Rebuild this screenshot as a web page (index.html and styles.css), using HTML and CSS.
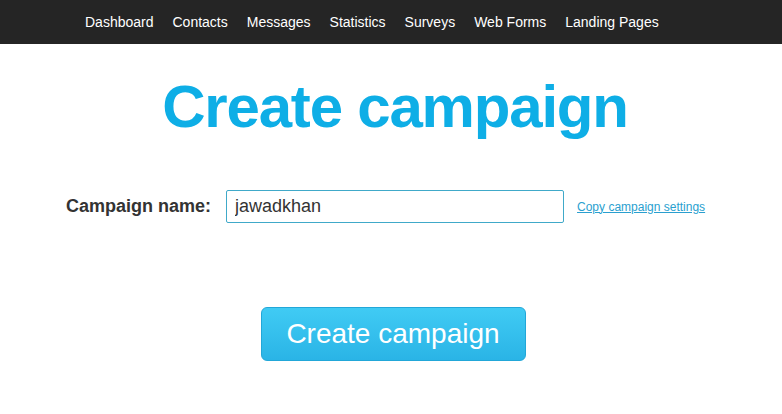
FILE: index.html
```html
<!DOCTYPE html>
<html lang="en">
     <head>
          <meta charset="UTF-8" />
          <meta name="viewport" content="width=device-width, initial-scale=1.0" />
          <title>Create campaign</title>
          <link rel="stylesheet" href="styles.css">
     </head>
     <body>
          <nav class="topbar">
               <ul>
                    <li><a href="#">Dashboard</a></li>
                    <li><a href="#">Contacts</a></li>
                    <li><a href="#">Messages</a></li>
                    <li><a href="#">Statistics</a></li>
                    <li><a href="#">Surveys</a></li>
                    <li><a href="#">Web Forms</a></li>
                    <li><a href="#">Landing Pages</a></li>
               </ul>
          </nav>

          <main class="page">
               <h1 class="page-title">Create campaign</h1>

               <form class="campaign-form">
                    <div class="field-row">
                         <label class="field-label" for="cname">Campaign name:</label>
                         <input class="field-input" id="cname" type="text" value="jawadkhan" />
                         <a class="copy-link" href="#">Copy campaign settings</a>
                    </div>
                    <div class="submit-row">
                         <button class="create-btn" type="button">Create campaign</button>
                    </div>
               </form>
          </main>
     </body>
</html>
```

FILE: styles.css
```css
* {
     padding: 0;
     margin: 0;
     box-sizing: border-box;
}
body {
     font-family: Arial, "Liberation Sans", Helvetica, sans-serif;
     background-color: #fff;
     color: #333;
}

/* top navigation */
.topbar {
     height: 44px;
     background-color: #252525;
     display: flex;
     align-items: center;
     padding-left: 85px;
}
.topbar ul {
     list-style-type: none;
     display: flex;
     gap: 19px;
}
.topbar ul li a {
     text-decoration: none;
     color: #fff;
     font-size: 14px;
     line-height: 16px;
}

/* main */
.page {
     display: flex;
     flex-direction: column;
     align-items: center;
}
.page-title {
     margin-top: 33px;
     font-size: 60px;
     line-height: 60px;
     letter-spacing: -1.2px;
     font-weight: bold;
     color: #0eaee6;
     padding-left: 8px;
}

.campaign-form {
     width: 100%;
}
.field-row {
     display: flex;
     align-items: center;
     margin-top: 53px;
     padding-left: 66px;
}
.field-label {
     font-size: 18px;
     font-weight: bold;
     color: #333;
     margin-right: 15px;
}
.field-input {
     width: 338px;
     height: 33px;
     border: 1px solid #40a9c9;
     border-radius: 2px;
     padding: 0 8px;
     font-family: inherit;
     font-size: 18px;
     color: #333;
     outline: none;
}
.copy-link {
     margin-left: 13px;
     font-size: 12px;
     color: #2a9fcf;
     text-decoration: underline;
}

.submit-row {
     display: flex;
     justify-content: center;
     margin-top: 84px;
     padding-left: 4px;
}
.create-btn {
     width: 265px;
     height: 54px;
     border: 1px solid #22a7d8;
     border-radius: 6px;
     background: linear-gradient(#40cbf4, #2ab4e6);
     color: #fff;
     font-family: inherit;
     font-size: 28px;
     cursor: pointer;
}
```
